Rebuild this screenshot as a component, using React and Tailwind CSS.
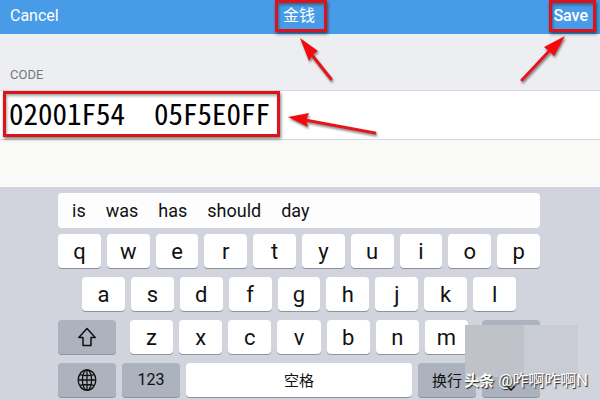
import { clsx } from 'clsx';

const SUGGESTIONS = ['is', 'was', 'has', 'should', 'day'];
const TOP_ROW = ['q', 'w', 'e', 'r', 't', 'y', 'u', 'i', 'o', 'p'];
const HOME_ROW = ['a', 's', 'd', 'f', 'g', 'h', 'j', 'k', 'l'];
const BOTTOM_ROW = ['z', 'x', 'c', 'v', 'b', 'n', 'm'];

const Key = ({ children, dark, className, ...rest }) => (
  <button
    type="button"
    className={clsx(
      'flex h-[34px] items-center justify-center rounded-[4px] shadow-[0_1px_0_#8f939c]',
      dark ? 'bg-[#acb2be]' : 'bg-white',
      className,
    )}
    {...rest}
  >
    {children}
  </button>
);

const Letters = ({ keys }) =>
  keys.map((k) => (
    <Key key={k} className="min-w-0 flex-1 text-[22px]">
      {k}
    </Key>
  ));

const ShiftIcon = () => (
  <svg width="20" height="20" viewBox="0 0 20 20" fill="none" stroke="#111" strokeWidth="1.5" strokeLinejoin="round" aria-hidden>
    <path d="M10 1.5 L18.2 10.5 H14 V18.5 H6 V10.5 H1.8 Z" />
  </svg>
);

const GlobeIcon = () => (
  <svg width="20" height="22" viewBox="0 0 20 22" fill="none" stroke="#111" strokeWidth="1.3" aria-hidden>
    <ellipse cx="10" cy="11" rx="8.8" ry="10.2" />
    <ellipse cx="10" cy="11" rx="4.6" ry="10.2" />
    <path d="M10 0.8 V21.2 M1.2 11 H18.8 M2.8 5.6 Q10 7.4 17.2 5.6 M2.8 16.4 Q10 14.6 17.2 16.4" />
  </svg>
);

const HideIcon = () => (
  <svg width="10" height="6" viewBox="0 0 10 6" fill="none" stroke="#111" strokeWidth="1.5" aria-hidden>
    <path d="M1 1 L5 5 L9 1" />
  </svg>
);

const Frame = ({ className }) => (
  <span
    className={clsx(
      'pointer-events-none absolute border-[3px] border-[#db141b] shadow-[1px_2px_3px_rgba(0,0,0,0.5),inset_1px_2px_3px_rgba(0,0,0,0.35)]',
      className,
    )}
    aria-hidden
  />
);

const Arrow = ({ className, width, height, line, head }) => (
  <svg
    className={clsx('pointer-events-none absolute drop-shadow-[1px_2px_1px_rgba(0,0,0,0.45)]', className)}
    width={width}
    height={height}
    aria-hidden
  >
    <path d={line} stroke="#e8141a" strokeWidth="3" strokeLinecap="round" />
    <path d={head} fill="#f5090c" />
  </svg>
);

export default function App() {
  return (
    <main className="relative flex min-h-screen flex-col overflow-hidden bg-[#f9faf8] font-[Roboto,'Noto_Sans_CJK_SC',sans-serif] text-[#111]">
      <header className="grid h-[34px] grid-cols-3 items-center bg-[#489be6] pr-3 pl-[10px] pb-[2px] text-white">
        <button type="button" className="justify-self-start text-[16px]">
          Cancel
        </button>
        <h1 className="relative justify-self-center text-[16px]">
          金钱
          <Frame className="-inset-y-1 -right-3 -left-2" />
        </h1>
        <button type="button" className="relative justify-self-end text-[16px] font-medium">
          Save
          <Frame className="-inset-y-1 -right-2 -left-1" />
        </button>
      </header>

      <section className="bg-[#edeef2]">
        <label htmlFor="code" className="block h-14 px-[10px] pt-8 text-[13px] leading-[18px] text-[#77787d]">
          CODE
        </label>
        <div className="relative h-[50px] border-y border-[#d8d8dc] bg-white">
          <input
            id="code"
            defaultValue="02001F54  05F5E0FF"
            className="h-full w-full bg-transparent px-[9px] pb-1.5 font-['Noto_Sans_Mono_CJK_SC','DejaVu_Sans_Mono',monospace] text-[29px] text-black outline-none"
          />
          <Frame className="top-0 left-[3px] h-[46px] w-[277px]" />
        </div>
      </section>

      <section className="mt-[47px] flex-1 bg-[#d1d4dc] pt-[6px] pr-[60px] pb-1 pl-[58px]" aria-label="Keyboard">
        <div className="flex h-[35px] items-center gap-5 rounded-[4px] bg-[#fdfdfd] px-[14px] text-[18px]">
          {SUGGESTIONS.map((word) => (
            <button type="button" key={word}>
              {word}
            </button>
          ))}
        </div>
        <div className="mt-[6px] flex flex-col gap-[9px]">
          <div className="flex gap-[6px]">
            <Letters keys={TOP_ROW} />
          </div>
          <div className="flex gap-[6px] px-6">
            <Letters keys={HOME_ROW} />
          </div>
          <div className="flex gap-[14px]">
            <Key dark className="w-[58px]" aria-label="Shift">
              <ShiftIcon />
            </Key>
            <div className="flex flex-1 gap-[6px]">
              <Letters keys={BOTTOM_ROW} />
            </div>
            <Key dark className="w-[58px]" aria-label="Delete" />
          </div>
          <div className="flex gap-[6px] text-[16px]">
            <Key dark className="w-[58px]" aria-label="Next keyboard">
              <GlobeIcon />
            </Key>
            <Key dark className="w-[58px]">
              123
            </Key>
            <Key className="flex-1 pt-0.5 text-[15px]">空格</Key>
            <Key dark className="w-[58px] pt-0.5 text-[15px]">
              换行
            </Key>
            <Key dark className="w-[58px] pt-4" aria-label="Hide keyboard">
              <HideIcon />
            </Key>
          </div>
        </div>
      </section>

      <Arrow
        className="top-[37px] left-[298px]"
        width="40"
        height="46"
        line="M33 42 L14 18"
        head="M2 1 L20 14 L15 17 L11 24 Z"
      />
      <Arrow
        className="top-[35px] right-[32px]"
        width="50"
        height="50"
        line="M4 45 L34 13"
        head="M47 1 L36 21 L32 17 L26 12 Z"
      />
      <Arrow
        className="top-[112px] left-[287px]"
        width="92"
        height="26"
        line="M88 21 L18 8"
        head="M1 5 L22 1 L19 8 L21 15 Z"
      />

      <div className="pointer-events-none absolute right-[22px] bottom-[24px] flex h-[52px]">
        <div className="w-[59px] bg-[#bfc2c9]" />
        <div className="w-[54px] bg-[#caccd5]" />
      </div>
      <p className="pointer-events-none absolute right-3 bottom-2 text-[16px] text-white [text-shadow:1px_1px_1px_#222]">
        <span className="text-[15px] font-bold">头条</span> @咋啊咋啊N
      </p>
    </main>
  );
}
